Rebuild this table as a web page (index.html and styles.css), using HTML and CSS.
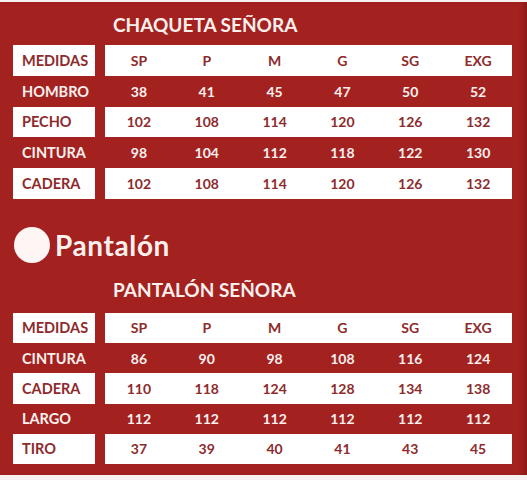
FILE: index.html
```html
<!DOCTYPE html>
<html lang="es">
<head>
<meta charset="utf-8">
<title>Tallas</title>
<link rel="stylesheet" href="styles.css">
</head>
<body>
<div class="page">
  <h2 class="title">CHAQUETA SEÑORA</h2>
  <div class="table t1">
    <div class="row w"><div class="label">MEDIDAS</div><div class="vals"><span>SP</span><span>P</span><span>M</span><span>G</span><span>SG</span><span>EXG</span></div></div>
    <div class="row"><div class="label">HOMBRO</div><div class="vals"><span>38</span><span>41</span><span>45</span><span>47</span><span>50</span><span>52</span></div></div>
    <div class="row w"><div class="label">PECHO</div><div class="vals"><span>102</span><span>108</span><span>114</span><span>120</span><span>126</span><span>132</span></div></div>
    <div class="row"><div class="label">CINTURA</div><div class="vals"><span>98</span><span>104</span><span>112</span><span>118</span><span>122</span><span>130</span></div></div>
    <div class="row w"><div class="label">CADERA</div><div class="vals"><span>102</span><span>108</span><span>114</span><span>120</span><span>126</span><span>132</span></div></div>
  </div>

  <div class="section">
    <span class="dot"></span>
    <span class="section-name">Pantalón</span>
  </div>

  <h2 class="title title2">PANTALÓN SEÑORA</h2>
  <div class="table t2">
    <div class="row w"><div class="label">MEDIDAS</div><div class="vals"><span>SP</span><span>P</span><span>M</span><span>G</span><span>SG</span><span>EXG</span></div></div>
    <div class="row"><div class="label">CINTURA</div><div class="vals"><span>86</span><span>90</span><span>98</span><span>108</span><span>116</span><span>124</span></div></div>
    <div class="row w"><div class="label">CADERA</div><div class="vals"><span>110</span><span>118</span><span>124</span><span>128</span><span>134</span><span>138</span></div></div>
    <div class="row"><div class="label">LARGO</div><div class="vals"><span>112</span><span>112</span><span>112</span><span>112</span><span>112</span><span>112</span></div></div>
    <div class="row w"><div class="label">TIRO</div><div class="vals"><span>37</span><span>39</span><span>40</span><span>41</span><span>43</span><span>45</span></div></div>
  </div>
</div>
</body>
</html>
```

FILE: styles.css
```css
html, body {
  margin: 0;
  padding: 0;
  background: #f4f1f0;
}
body {
  font-family: Lato, "Open Sans", "DejaVu Sans", sans-serif;
  width: 527px;
  height: 480px;
  overflow: hidden;
}
.page {
  margin-top: 2px;
  height: 473px;
  background: #a3211f;
  box-shadow: inset -6px 0 6px -4px rgba(60, 0, 0, 0.35);
  padding-top: 11px;
  box-sizing: border-box;
  color: #fbf0ee;
}
.title {
  margin: 0;
  padding-left: 113px;
  font-size: 19px;
  line-height: 24px;
  font-weight: 700;
  color: #fbf0ee;
}
.table {
  margin: 8px 0 0 13px;
  width: 499px;
}
.row {
  display: grid;
  grid-template-columns: 82px 407px;
  column-gap: 10px;
  height: 30.75px;
  align-items: stretch;
}
.t2 { margin-top: 11px; }
.t2 .row { height: 30.25px; }
.label {
  display: flex;
  align-items: center;
  padding-left: 9px;
  font-size: 14.5px;
  font-weight: 700;
}
.vals {
  display: grid;
  grid-template-columns: repeat(6, 1fr);
  align-items: center;
  text-align: center;
  font-size: 14px;
  font-weight: 700;
}
.row.w .label,
.row.w .vals {
  background: #ffffff;
  color: #8d2b2d;
}
.section {
  display: flex;
  align-items: center;
  gap: 5px;
  margin: 28px 0 0 14px;
  height: 36px;
}
.dot {
  width: 36px;
  height: 36px;
  border-radius: 50%;
  background: #fdf6f5;
  flex: none;
}
.section-name {
  font-size: 28px;
  line-height: 36px;
  font-weight: 700;
  letter-spacing: 0.6px;
  color: #fbf0ee;
}
.title2 { margin-top: 15px; }
```
